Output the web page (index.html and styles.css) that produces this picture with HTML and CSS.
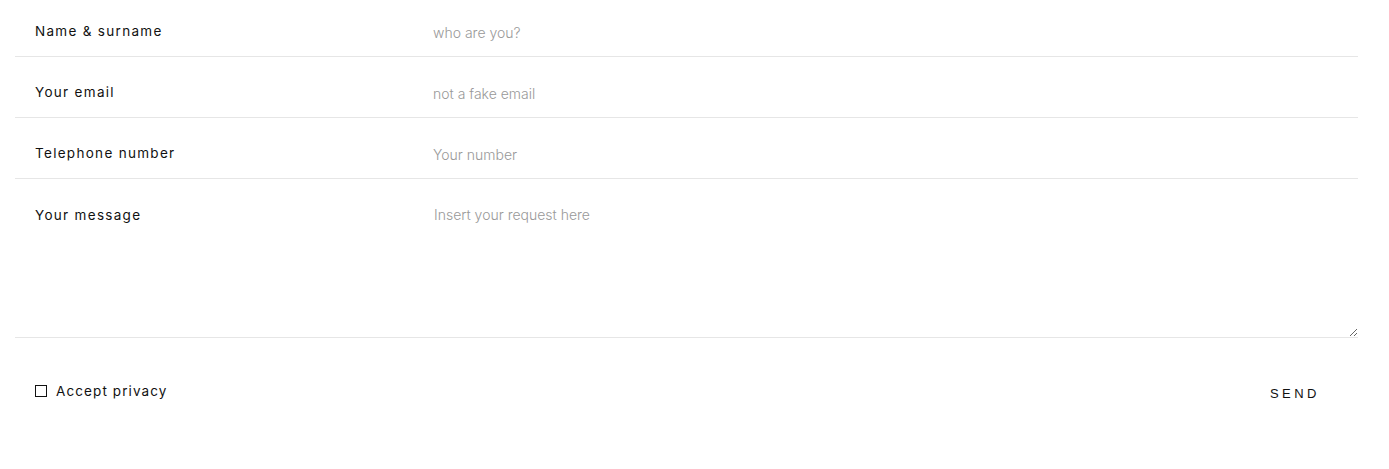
FILE: index.html
```html
<!DOCTYPE html>
<html lang="en">
<head>
<meta charset="utf-8">
<title>Contact form</title>
<link rel="stylesheet" href="styles.css">
</head>
<body>
<form class="contact">
  <div class="row row-first">
    <label class="label" for="name">Name &amp; surname</label>
    <input class="field" id="name" type="text" placeholder="who are you?">
  </div>
  <div class="row">
    <label class="label" for="email">Your email</label>
    <input class="field" id="email" type="email" placeholder="not a fake email">
  </div>
  <div class="row">
    <label class="label" for="tel">Telephone number</label>
    <input class="field" id="tel" type="tel" placeholder="Your number">
  </div>
  <div class="row row-message">
    <label class="label" for="msg">Your message</label>
    <textarea class="field area" id="msg" placeholder="Insert your request here"></textarea>
  </div>
  <div class="footer">
    <label class="privacy"><span class="box"></span>Accept privacy</label>
    <button class="send" type="button">SEND</button>
  </div>
</form>
</body>
</html>
```
FILE: styles.css
```css
* { box-sizing: border-box; }
html, body { margin: 0; padding: 0; background: #fff; }
body {
  font-family: "Inter", "Open Sans", sans-serif;
  color: #111;
}
.contact {
  margin: -4px 31px 0 15px;
}
.row {
  display: flex;
  align-items: flex-start;
  height: 61px;
  padding-top: 25px;
  border-bottom: 1px solid #e6e6e6;
}
.label {
  width: 418px;
  padding-left: 20px;
  font-size: 13.5px;
  line-height: 20px;
  letter-spacing: 1.3px;
  color: #111;
}
.field {
  flex: 1;
  border: 0;
  outline: 0;
  padding: 0;
  margin: 2px 0 0 0;
  font-family: "Inter", "Open Sans", sans-serif;
  font-size: 14px;
  font-weight: 300;
  line-height: 20px;
  height: 20px;
  color: #333;
  background: transparent;
}
.field::placeholder { color: #999; }
.row-message {
  height: 159px;
  padding-top: 26px;
}
.area {
  height: 132px;
  margin: 0 0 0 1px;
  resize: vertical;
  align-self: flex-end;
}
.footer {
  display: flex;
  justify-content: space-between;
  align-items: center;
  padding: 39px 38px 0 20px;
}
.privacy {
  display: flex;
  align-items: center;
  font-size: 13.5px;
  letter-spacing: 1.1px;
  color: #111;
}
.box {
  width: 12px;
  height: 12px;
  border: 1px solid #111;
  margin-right: 9px;
}
.send {
  border: 0;
  background: transparent;
  font-family: "Liberation Sans", Arial, sans-serif;
  font-size: 13px;
  letter-spacing: 3.5px;
  color: #111;
  padding: 4px 0;
  margin-top: 5px;
}
```
